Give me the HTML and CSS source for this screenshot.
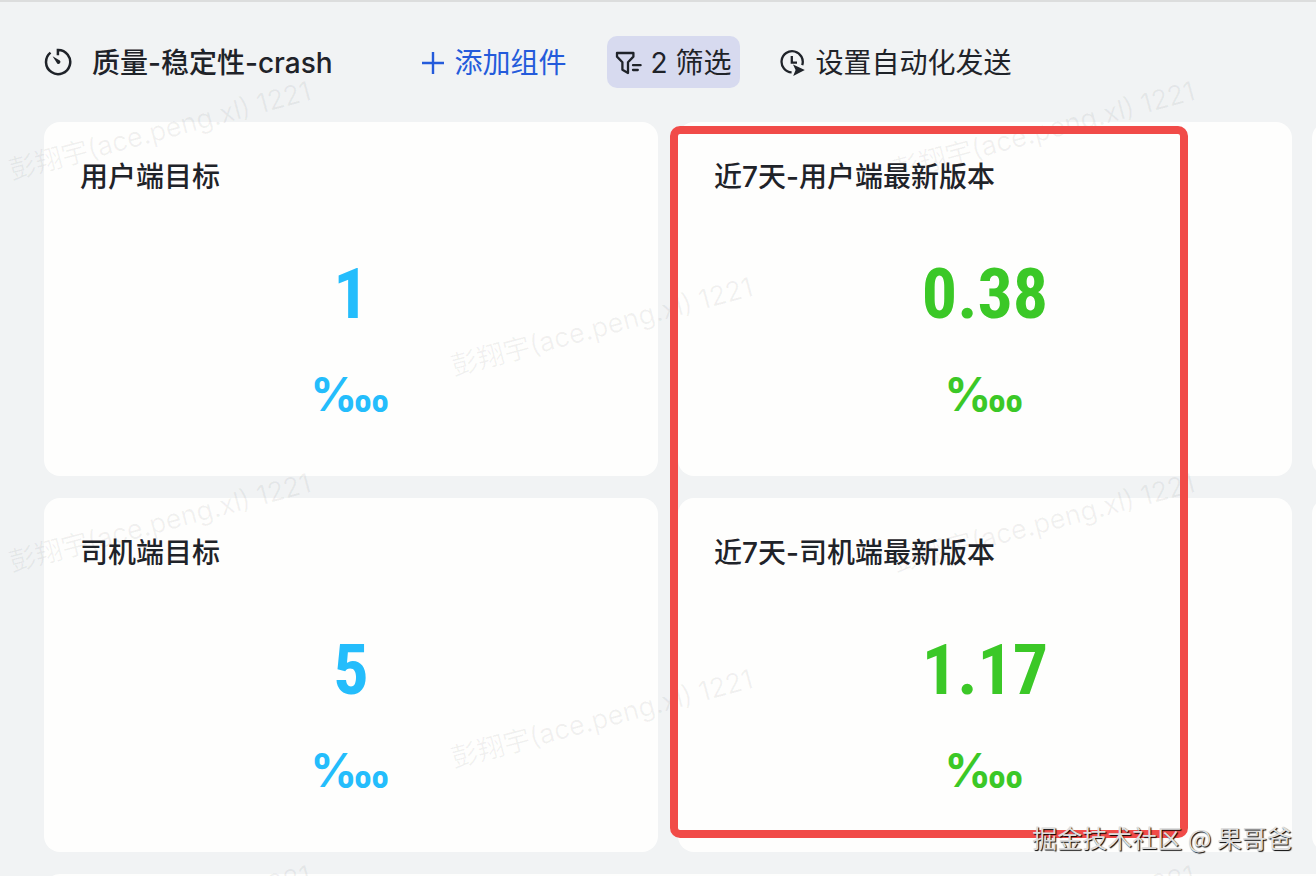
FILE: index.html
```html
<!DOCTYPE html>
<html lang="zh-CN">
<head>
  <meta charset="UTF-8" />
  <meta name="viewport" content="width=device-width, initial-scale=1.0"/>
  <title>质量-稳定性-crash</title>
  <link rel="stylesheet" href="styles.css">
</head>
<body>
  <div class="page">
    <header class="toolbar">
      <svg class="icon-gauge" viewBox="0 0 28 28" fill="none" stroke="currentColor" stroke-width="2.5">
        <path d="M13.9 7.2V1.9A12.1 12.1 0 1 1 6.5 4.6"/>
        <path d="M8.6 8.2L15.8 12.6A1.8 1.8 0 0 1 13.2 15.4Z" fill="currentColor" stroke="none"/>
      </svg>
      <h1 class="title">质量-稳定性-crash</h1>

      <button class="tool add" type="button">
        <svg class="icon-plus" viewBox="0 0 24 24" fill="none" stroke="currentColor" stroke-width="2.4">
          <path d="M12 1V23M1 12H23"/>
        </svg>
        添加组件
      </button>

      <button class="tool filter" type="button">
        <svg class="icon-filter" viewBox="0 0 28 24" fill="none" stroke="currentColor" stroke-width="2.3" stroke-linejoin="round" stroke-linecap="round">
          <path d="M2 2H18.4V5.6L13 11.2V22L7.4 18.8V11.2L2 5.6Z"/>
          <path d="M18 14.2H25.6M18 19H22.8"/>
        </svg>
        2 筛选
      </button>

      <button class="tool auto" type="button">
        <svg class="icon-clock" viewBox="0 0 26 28" fill="none" stroke="currentColor" stroke-width="2.3">
          <path d="M11.6 23.4A10.6 10.6 0 1 1 22.2 16.2M11.8 7V13.6H17"/>
          <path d="M13 15.4L24.8 21L13.2 27L15.6 21Z" fill="currentColor" stroke="none"/>
        </svg>
        设置自动化发送
      </button>
    </header>

    <main class="board">
      <section class="card">
        <h2>用户端目标</h2>
        <p class="value">1</p>
        <p class="unit">‱</p>
      </section>
      <section class="card green">
        <h2>近7天-用户端最新版本</h2>
        <p class="value">0.38</p>
        <p class="unit">‱</p>
      </section>
      <section class="card"></section>

      <section class="card">
        <h2>司机端目标</h2>
        <p class="value">5</p>
        <p class="unit">‱</p>
      </section>
      <section class="card green">
        <h2>近7天-司机端最新版本</h2>
        <p class="value">1.17</p>
        <p class="unit">‱</p>
      </section>
      <section class="card"></section>

      <section class="card wide"></section>
    </main>

    <div class="marks">
      <span class="mark col1 row1">彭翔宇(ace.peng.xl) 1221</span>
      <span class="mark col3 row1">彭翔宇(ace.peng.xl) 1221</span>
      <span class="mark col2 row2">彭翔宇(ace.peng.xl) 1221</span>
      <span class="mark col1 row3">彭翔宇(ace.peng.xl) 1221</span>
      <span class="mark col3 row3">彭翔宇(ace.peng.xl) 1221</span>
      <span class="mark col2 row4">彭翔宇(ace.peng.xl) 1221</span>
      <span class="mark col1 row5">彭翔宇(ace.peng.xl) 1221</span>
      <span class="mark col3 row5">彭翔宇(ace.peng.xl) 1221</span>
    </div>

    <div class="highlight"></div>
    <div class="credit">掘金技术社区 @ 果哥爸</div>
  </div>
</body>
</html>
```
FILE: styles.css
```css
* {
  box-sizing: border-box;
}

body {
  margin: 0;
  background: #f1f3f4;
  color: #1f2329;
  font-family: Inter, "Noto Sans CJK SC", sans-serif;
  font-size: 28px;
  line-height: 38px;
}

h1, h2, p {
  margin: 0;
}

.page {
  position: relative;
  height: 100vh;
  padding: 34px 24px 0 44px;
  border-top: 2px solid #dcdddd;
  overflow: hidden;
}

/* toolbar */
.toolbar {
  display: flex;
  align-items: center;
  height: 52px;
  margin-bottom: 34px;
  white-space: nowrap;
}

.toolbar svg {
  flex: none;
}

.title {
  margin: 0 88px 0 20px;
  padding-top: 2px;
  font-size: 28px;
  font-weight: 500;
}

.tool {
  display: flex;
  align-items: center;
  height: 52px;
  padding: 2px 0 0;
  border: 0;
  background: none;
  color: inherit;
  font: inherit;
}

.add {
  gap: 10px;
  color: #245bdb;
}

.filter {
  gap: 8px;
  margin: 0 40px;
  padding: 2px 8px 0;
  border-radius: 10px;
  background: #d7daef;
}

.auto {
  gap: 10px;
}

.icon-gauge {
  width: 28px;
  height: 28px;
}

.icon-plus {
  width: 24px;
  height: 24px;
}

.icon-filter {
  width: 28px;
  height: 24px;
}

.icon-clock {
  width: 26px;
  height: 28px;
}

/* cards: two full columns, the third one runs off the edge */
.board {
  display: grid;
  grid-template-columns: repeat(3, calc((100% - 20px) / 2));
  grid-auto-rows: minmax(354px, auto);
  gap: 22px 20px;
}

.card {
  display: flex;
  flex-direction: column;
  padding: 36px;
  border-radius: 16px;
  background: #fefefd;
  color: #24bdfc;
}

.wide {
  grid-column: 1 / -1;
}

.green {
  color: #3bc827;
}

.card h2 {
  color: #1f2329;
  font-size: 28px;
  font-weight: 500;
}

.value {
  margin-top: 62px;
  font-family: "Roboto Condensed", "Liberation Sans Narrow", Roboto, sans-serif;
  font-size: 70px;
  font-weight: 700;
  line-height: 72px;
  text-align: center;
}

.unit {
  margin-top: 28px;
  font-size: 46px;
  font-weight: 700;
  line-height: 72px;
  text-align: center;
}

/* slanted user name repeated over the page */
.mark {
  position: absolute;
  width: 320px;
  color: rgba(31, 35, 41, 0.06);
  font-size: 27px;
  text-align: center;
  white-space: nowrap;
  transform: rotate(-15deg);
}

.col1 { left: 0; }
.col2 { left: 442px; }
.col3 { left: 884px; }

.row1 { top: 110px; }
.row2 { top: 306px; }
.row3 { top: 502px; }
.row4 { top: 698px; }
.row5 { top: 894px; }

.highlight {
  position: absolute;
  top: 124px;
  left: 670px;
  width: 518px;
  height: 712px;
  border: 8px solid #f14b48;
  border-radius: 10px;
}

.credit {
  position: absolute;
  right: 24px;
  bottom: 20px;
  color: #dedede;
  font-family: "Noto Sans CJK SC", sans-serif;
  font-size: 25px;
  text-shadow: 1px 1px 1px #000;
}
```
